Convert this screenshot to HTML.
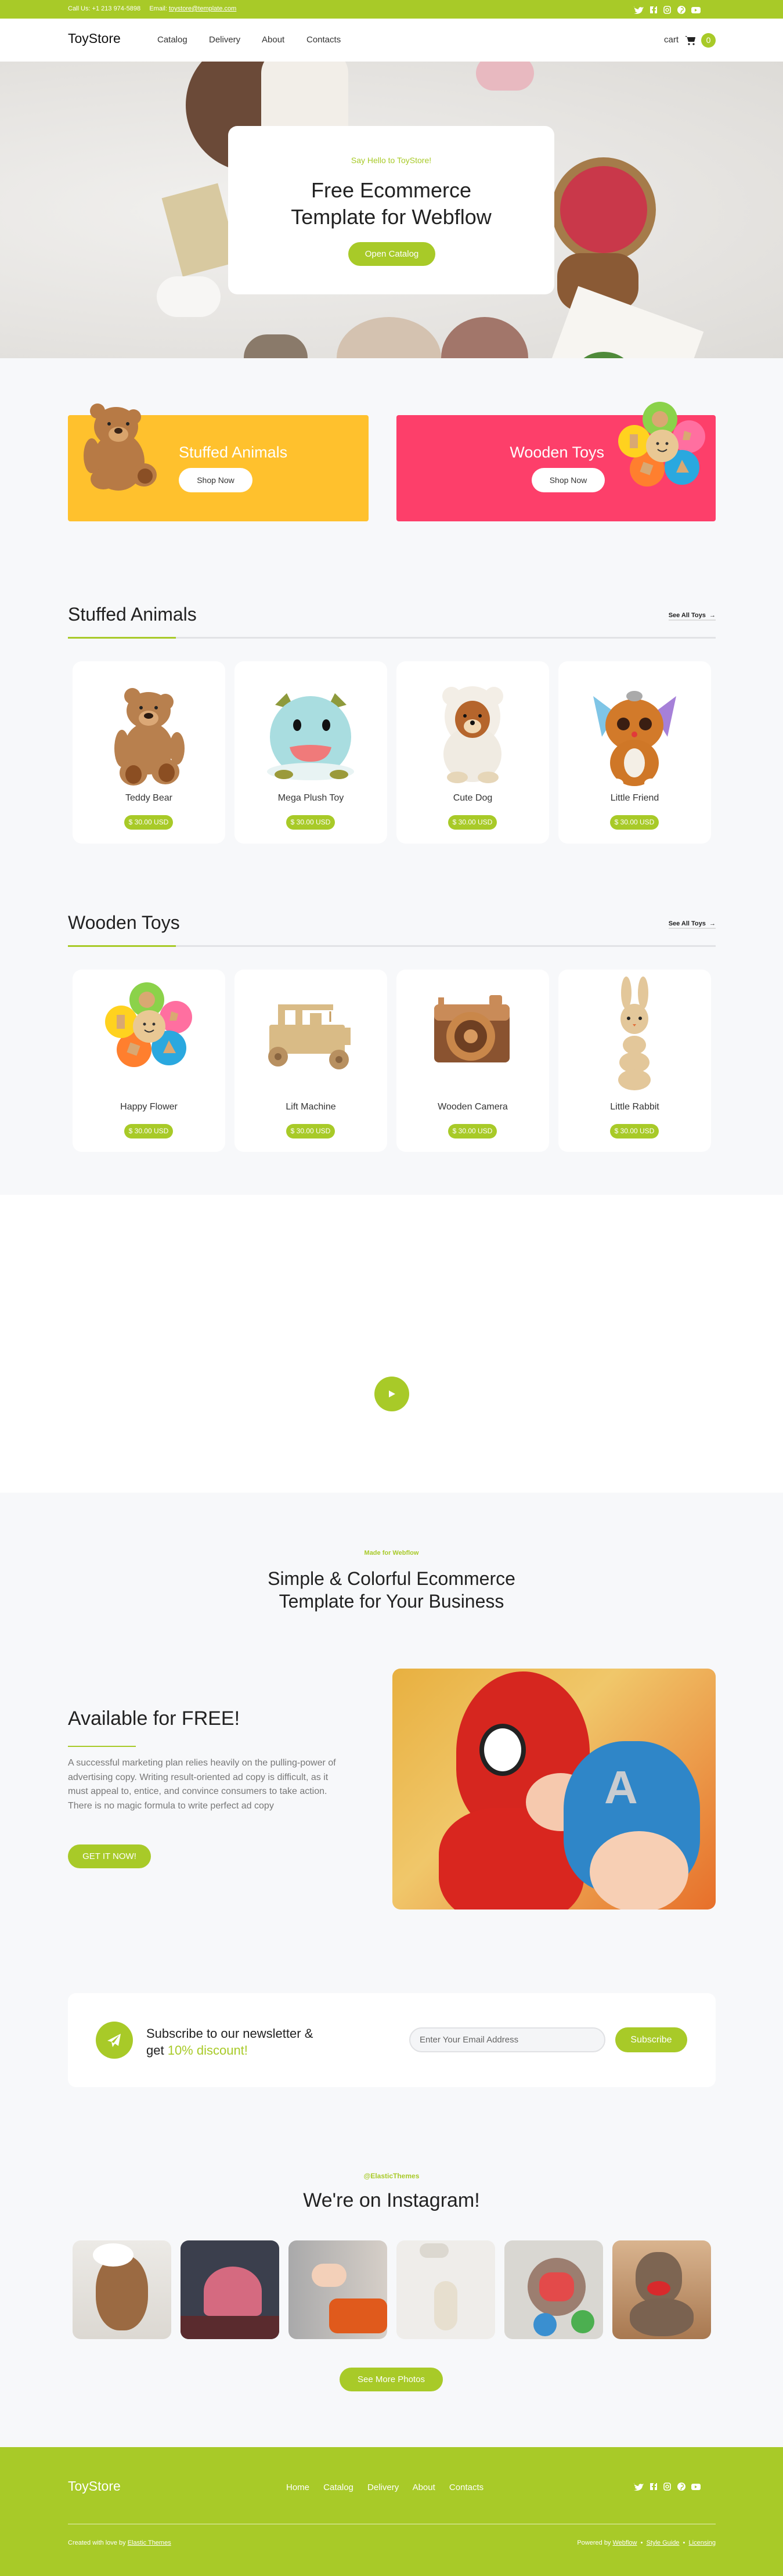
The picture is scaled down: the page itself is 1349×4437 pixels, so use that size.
<!DOCTYPE html>
<html><head><meta charset="utf-8">
<style>
*{margin:0;padding:0;box-sizing:border-box}
body{width:1349px;height:4437px;position:relative;background:#f7f8fa;font-family:"Liberation Sans",Arial,sans-serif;color:#222;overflow:hidden}
.a{position:absolute}
.g{color:#a8ca28}
.pill{position:absolute;background:#a8ca28;color:#fff;border-radius:30px;text-align:center}
.card{position:absolute;background:#fff;border-radius:16px;width:263px;height:314px}
.card .nm{position:absolute;left:0;right:0;text-align:center;font-size:16px;color:#333}
.card .pr{position:absolute;left:89px;width:84px;height:25px;line-height:25px;font-size:12px;background:#a8ca28;color:#fff;border-radius:13px;text-align:center}
.card .im{position:absolute;left:0;right:0;top:0;height:230px}
.sh{position:absolute;left:117px;font-size:32px;color:#222}
.see{position:absolute;right:116px;font-size:11px;font-weight:bold;color:#222;border-bottom:2px solid #ddd;padding-bottom:1px}
.ln{position:absolute;left:117px;width:1116px;height:3px;background:#e2e3e6}
.ln i{position:absolute;left:0;top:0;width:186px;height:3px;background:#a8ca28}
.ig{position:absolute;top:3859px;width:170px;height:170px;border-radius:14px;overflow:hidden}
</style></head><body>

<!-- top bar -->
<div class="a" style="left:0;top:0;width:1349px;height:32px;background:#a8ca28"></div>
<div class="a" style="left:117px;top:9px;font-size:11px;color:#fff">Call Us: +1 213 974-5898 &nbsp;&nbsp;&nbsp; Email: <u>toystore@template.com</u></div>
<svg class="a" style="left:1090px;top:8px" width="160" height="18" viewBox="0 0 160 18" fill="#fff">
<path d="M2 4c3 3 6 4 8 4 0-3 3-5 6-3 1 0 2-1 3-1-1 1-1 2-2 2 1 0 2 0 2-1-1 1-1 2-2 2 0 6-6 11-15 8 3 0 5-1 6-2-2 0-4-1-4-3h2c-2-1-3-2-3-4 1 0 1 1 2 1-2-1-3-3-2-5z"/>
<path d="M31 3h10c1 0 1 0 1 1v10c0 1 0 1-1 1h-3v-5h2v-2h-2v-2c0-1 1-1 2-1h0V3h-2c-2 0-3 1-3 3v2h-2v2h2v5h-4c-1 0-1 0-1-1V4c0-1 0-1 1-1z"/>
<rect x="54" y="3" width="11" height="12" rx="3" fill="none" stroke="#fff" stroke-width="1.6"/><circle cx="59.5" cy="9" r="2.5" fill="none" stroke="#fff" stroke-width="1.5"/>
<circle cx="84" cy="9" r="7"/><path d="M83 5c3-1 5 1 4 4-1 2-3 2-3 1l-1 5" stroke="#a8ca28" stroke-width="1.4" fill="none"/>
<rect x="101" y="4" width="16" height="11" rx="3"/><path d="M107 7l4 2.5-4 2.5z" fill="#a8ca28"/>
</svg>

<!-- nav -->
<div class="a" style="left:0;top:32px;width:1349px;height:74px;background:#fff"></div>
<div class="a" style="left:117px;top:53px;font-size:23px;color:#111">ToyStore</div>
<div class="a" style="left:271px;top:60px;font-size:15px;color:#333">Catalog</div>
<div class="a" style="left:360px;top:60px;font-size:15px;color:#333">Delivery</div>
<div class="a" style="left:451px;top:60px;font-size:15px;color:#333">About</div>
<div class="a" style="left:528px;top:60px;font-size:15px;color:#333">Contacts</div>
<div class="a" style="left:1144px;top:60px;font-size:15px;color:#333">cart</div>
<svg class="a" style="left:1180px;top:61px" width="19" height="18" viewBox="0 0 19 18"><path d="M0 1h3l3 10h10l2-7H5" fill="#222"/><path d="M4 3h14l-2 8H6z" fill="#222"/><circle cx="7" cy="15" r="1.6" fill="#222"/><circle cx="15" cy="15" r="1.6" fill="#222"/></svg>
<div class="pill" style="left:1208px;top:57px;width:25px;height:25px;line-height:25px;font-size:14px;border-radius:50%">0</div>

<!-- hero -->
<div class="a" style="left:0;top:106px;width:1349px;height:511px;overflow:hidden;background:radial-gradient(ellipse at 30% 50%,#f1f0ee,#e6e4e1 60%,#dddbd7)">
  <div class="a" style="left:320px;top:-40px;width:230px;height:230px;border-radius:50%;background:#6b4a38"></div>
  <div class="a" style="left:450px;top:-20px;width:150px;height:170px;border-radius:40px;background:#f2eee8"></div>
  <div class="a" style="left:820px;top:-10px;width:100px;height:60px;border-radius:30px;background:#e8b9c0"></div>
  <div class="a" style="left:950px;top:165px;width:180px;height:180px;border-radius:50%;background:#a57b4a"></div>
  <div class="a" style="left:965px;top:180px;width:150px;height:150px;border-radius:50%;background:#c9384a"></div>
  <div class="a" style="left:960px;top:330px;width:140px;height:100px;border-radius:40px;background:#8a5a35"></div>
  <div class="a" style="left:955px;top:420px;width:230px;height:200px;transform:rotate(20deg);background:#f7f5f1"></div>
  <div class="a" style="left:990px;top:500px;width:100px;height:80px;border-radius:50%;background:#4f8a3a"></div>
  <div class="a" style="left:295px;top:220px;width:100px;height:140px;transform:rotate(-15deg);background:#d8c9a0"></div>
  <div class="a" style="left:270px;top:370px;width:110px;height:70px;border-radius:40px;background:#f7f6f4"></div>
  <div class="a" style="left:580px;top:440px;width:180px;height:140px;border-radius:50%;background:#d4c2b0"></div>
  <div class="a" style="left:760px;top:440px;width:150px;height:140px;border-radius:50%;background:#a2766a"></div>
  <div class="a" style="left:420px;top:470px;width:110px;height:80px;border-radius:40px;background:#8a7a6a"></div>
</div>
<div class="a" style="left:393px;top:217px;width:562px;height:290px;background:#fff;border-radius:16px"></div>
<div class="a g" style="left:393px;top:268px;width:562px;text-align:center;font-size:14px">Say Hello to ToyStore!</div>
<div class="a" style="left:393px;top:305px;width:562px;text-align:center;font-size:36px;line-height:46px;color:#222">Free Ecommerce<br>Template for Webflow</div>
<div class="pill" style="left:600px;top:417px;width:150px;height:41px;line-height:41px;font-size:15px">Open Catalog</div>

<!-- banners -->
<div class="a" style="left:117px;top:715px;width:518px;height:183px;background:#ffc12d;border-radius:4px"></div>
<div class="a" style="left:683px;top:715px;width:550px;height:183px;background:#fd3f6a;border-radius:4px"></div>
<svg class="a" style="left:138px;top:690px" width="140" height="155" viewBox="0 0 140 155">
<g fill="#b77a45"><circle cx="30" cy="18" r="13"/><circle cx="92" cy="28" r="13"/><ellipse cx="62" cy="45" rx="38" ry="34"/><ellipse cx="66" cy="105" rx="45" ry="50"/><ellipse cx="20" cy="95" rx="14" ry="30"/><ellipse cx="40" cy="135" rx="22" ry="18"/><ellipse cx="110" cy="128" rx="22" ry="20"/></g>
<ellipse cx="66" cy="58" rx="17" ry="13" fill="#d9a46c"/><ellipse cx="66" cy="52" rx="7" ry="5" fill="#3a2417"/><circle cx="50" cy="40" r="3" fill="#222"/><circle cx="82" cy="40" r="3" fill="#222"/>
<ellipse cx="112" cy="130" rx="13" ry="13" fill="#8a4f25"/></svg>
<div class="a" style="left:308px;top:764px;font-size:27px;color:#fff">Stuffed Animals</div>
<div class="a" style="left:308px;top:806px;width:127px;height:42px;line-height:42px;text-align:center;background:#fff;border-radius:21px;font-size:14px;color:#333">Shop Now</div>
<div class="a" style="left:683px;top:764px;width:358px;text-align:right;font-size:27px;color:#fff">Wooden Toys</div>
<div class="a" style="left:916px;top:806px;width:126px;height:42px;line-height:42px;text-align:center;background:#fff;border-radius:21px;font-size:14px;color:#333">Shop Now</div>
<svg class="a" style="left:1065px;top:690px" width="150" height="150" viewBox="0 0 150 150">
<circle cx="72" cy="32" r="30" fill="#8bd24a"/><circle cx="122" cy="62" r="28" fill="#ff6fa0"/><circle cx="110" cy="115" r="30" fill="#2aa8df"/><circle cx="50" cy="118" r="30" fill="#ff7f2e"/><circle cx="28" cy="70" r="28" fill="#ffd21f"/><circle cx="76" cy="78" r="28" fill="#e9c894"/>
<circle cx="72" cy="32" r="14" fill="#d9a872"/><rect x="20" y="58" width="14" height="24" fill="#d9a872"/><path d="M114 52l12 4-3 12h-12z" fill="#d9a872"/><path d="M110 102l12 22h-22z" fill="#d9a872"/><rect x="40" y="108" width="18" height="18" transform="rotate(20 49 117)" fill="#d9a872"/>
<circle cx="68" cy="74" r="2.5" fill="#333"/><circle cx="84" cy="74" r="2.5" fill="#333"/><path d="M68 84q8 7 16 0" stroke="#333" stroke-width="2" fill="none"/></svg>

<!-- Stuffed Animals section -->
<div class="sh" style="top:1040px">Stuffed Animals</div>
<div class="see" style="top:1054px">See All Toys &nbsp;&#8594;</div>
<div class="ln" style="top:1097px"><i></i></div>

<div class="card" style="left:125px;top:1139px">
<svg class="im" viewBox="0 0 263 230"><g fill="#b8804e"><circle cx="103" cy="60" r="14"/><circle cx="160" cy="70" r="14"/><ellipse cx="131" cy="85" rx="38" ry="32"/><ellipse cx="131" cy="150" rx="42" ry="45"/><ellipse cx="85" cy="150" rx="13" ry="32"/><ellipse cx="180" cy="150" rx="13" ry="28"/><ellipse cx="105" cy="192" rx="24" ry="22"/><ellipse cx="160" cy="190" rx="24" ry="22"/></g><ellipse cx="131" cy="98" rx="17" ry="13" fill="#dba876"/><ellipse cx="131" cy="94" rx="8" ry="5" fill="#2b1a10"/><circle cx="118" cy="80" r="3" fill="#222"/><circle cx="144" cy="80" r="3" fill="#222"/><ellipse cx="105" cy="195" rx="14" ry="16" fill="#8b4e22"/><ellipse cx="162" cy="192" rx="14" ry="16" fill="#8b4e22"/></svg>
<div class="nm" style="top:227px">Teddy Bear</div><div class="pr" style="top:265px">$ 30.00 USD</div></div>

<div class="card" style="left:404px;top:1139px">
<svg class="im" viewBox="0 0 263 230"><path d="M70 75l20-20 15 30z" fill="#8e9a3c"/><path d="M193 75l-20-20-15 30z" fill="#8e9a3c"/><ellipse cx="131" cy="130" rx="70" ry="70" fill="#a9dde0"/><ellipse cx="131" cy="190" rx="75" ry="15" fill="#e8f3f3"/><ellipse cx="108" cy="110" rx="7" ry="10" fill="#111"/><ellipse cx="158" cy="110" rx="7" ry="10" fill="#111"/><path d="M95 148q36-8 72 0q-6 25-36 25q-30 0-36-25z" fill="#f07a7a"/><ellipse cx="85" cy="195" rx="16" ry="8" fill="#9b9a3a"/><ellipse cx="180" cy="195" rx="16" ry="8" fill="#9b9a3a"/></svg>
<div class="nm" style="top:227px">Mega Plush Toy</div><div class="pr" style="top:265px">$ 30.00 USD</div></div>

<div class="card" style="left:683px;top:1139px">
<svg class="im" viewBox="0 0 263 230"><circle cx="95" cy="60" r="16" fill="#f3eee6"/><circle cx="168" cy="60" r="16" fill="#f3eee6"/><ellipse cx="131" cy="95" rx="48" ry="52" fill="#f3eee6"/><ellipse cx="131" cy="160" rx="50" ry="48" fill="#f0ebe2"/><ellipse cx="131" cy="100" rx="30" ry="32" fill="#b5652c"/><ellipse cx="131" cy="112" rx="15" ry="12" fill="#f1d9b5"/><circle cx="131" cy="106" r="4" fill="#111"/><circle cx="118" cy="94" r="3" fill="#111"/><circle cx="144" cy="94" r="3" fill="#111"/><ellipse cx="105" cy="200" rx="18" ry="10" fill="#e6d6b8"/><ellipse cx="158" cy="200" rx="18" ry="10" fill="#e6d6b8"/></svg>
<div class="nm" style="top:227px">Cute Dog</div><div class="pr" style="top:265px">$ 30.00 USD</div></div>

<div class="card" style="left:962px;top:1139px">
<svg class="im" viewBox="0 0 263 230"><path d="M60 60l40 30-25 40z" fill="#7fc5e6"/><path d="M203 60l-40 30 25 40z" fill="#a680d8"/><ellipse cx="131" cy="110" rx="50" ry="45" fill="#d27a2a"/><ellipse cx="131" cy="175" rx="42" ry="40" fill="#cf7727"/><ellipse cx="131" cy="175" rx="18" ry="25" fill="#f4efe6"/><circle cx="112" cy="108" r="11" fill="#3a1e12"/><circle cx="150" cy="108" r="11" fill="#3a1e12"/><circle cx="131" cy="126" r="5" fill="#e23a3a"/><ellipse cx="131" cy="60" rx="14" ry="9" fill="#aaa"/><ellipse cx="100" cy="210" rx="12" ry="8" fill="#fff"/><ellipse cx="160" cy="210" rx="12" ry="8" fill="#fff"/></svg>
<div class="nm" style="top:227px">Little Friend</div><div class="pr" style="top:265px">$ 30.00 USD</div></div>

<!-- Wooden Toys section -->
<div class="sh" style="top:1571px">Wooden Toys</div>
<div class="see" style="top:1585px">See All Toys &nbsp;&#8594;</div>
<div class="ln" style="top:1628px"><i></i></div>

<div class="card" style="left:125px;top:1670px">
<svg class="im" viewBox="0 0 263 230"><g transform="translate(56 20)">
<circle cx="72" cy="32" r="30" fill="#8bd24a"/><circle cx="122" cy="62" r="28" fill="#ff6fa0"/><circle cx="110" cy="115" r="30" fill="#2aa8df"/><circle cx="50" cy="118" r="30" fill="#ff7f2e"/><circle cx="28" cy="70" r="28" fill="#ffd21f"/><circle cx="76" cy="78" r="28" fill="#e9c894"/>
<circle cx="72" cy="32" r="14" fill="#d9a872"/><rect x="20" y="58" width="14" height="24" fill="#d9a872"/><path d="M114 52l12 4-3 12h-12z" fill="#d9a872"/><path d="M110 102l12 22h-22z" fill="#d9a872"/><rect x="40" y="108" width="18" height="18" transform="rotate(20 49 117)" fill="#d9a872"/>
<circle cx="68" cy="74" r="2.5" fill="#333"/><circle cx="84" cy="74" r="2.5" fill="#333"/><path d="M68 84q8 7 16 0" stroke="#333" stroke-width="2" fill="none"/></g></svg>
<div class="nm" style="top:228px">Happy Flower</div><div class="pr" style="top:266px">$ 30.00 USD</div></div>

<div class="card" style="left:404px;top:1670px">
<svg class="im" viewBox="0 0 263 230"><g fill="#d9bb86"><rect x="60" y="95" width="130" height="50" rx="4"/><rect x="80" y="60" width="90" height="10"/><rect x="75" y="60" width="12" height="45"/><rect x="150" y="100" width="50" height="30"/><rect x="105" y="70" width="12" height="35"/><rect x="130" y="75" width="20" height="30"/></g><path d="M165 72v18" stroke="#c49a5a" stroke-width="3"/><circle cx="75" cy="150" r="17" fill="#b89060"/><circle cx="180" cy="155" r="17" fill="#b89060"/><circle cx="75" cy="150" r="6" fill="#8a6540"/><circle cx="180" cy="155" r="6" fill="#8a6540"/></svg>
<div class="nm" style="top:228px">Lift Machine</div><div class="pr" style="top:266px">$ 30.00 USD</div></div>

<div class="card" style="left:683px;top:1670px">
<svg class="im" viewBox="0 0 263 230"><rect x="65" y="60" width="130" height="100" rx="8" fill="#8a5330"/><rect x="65" y="60" width="130" height="28" rx="8" fill="#c98b58"/><rect x="72" y="48" width="10" height="16" fill="#c98b58"/><rect x="160" y="44" width="22" height="18" rx="4" fill="#c98b58"/><circle cx="128" cy="115" r="42" fill="#c9874a"/><circle cx="128" cy="115" r="28" fill="#6e3f22"/><circle cx="128" cy="115" r="12" fill="#d79a60"/></svg>
<div class="nm" style="top:228px">Wooden Camera</div><div class="pr" style="top:266px">$ 30.00 USD</div></div>

<div class="card" style="left:962px;top:1670px">
<svg class="im" viewBox="0 0 263 230"><g fill="#e3c79a"><ellipse cx="117" cy="40" rx="9" ry="28"/><ellipse cx="146" cy="40" rx="9" ry="28"/><ellipse cx="131" cy="85" rx="24" ry="26"/><ellipse cx="131" cy="130" rx="20" ry="16"/><ellipse cx="131" cy="160" rx="26" ry="18"/><ellipse cx="131" cy="190" rx="28" ry="18"/></g><circle cx="121" cy="84" r="3" fill="#222"/><circle cx="141" cy="84" r="3" fill="#222"/><path d="M128 94l3 4 3-4z" fill="#e2703a"/></svg>
<div class="nm" style="top:228px">Little Rabbit</div><div class="pr" style="top:266px">$ 30.00 USD</div></div>

<!-- video -->
<div class="a" style="left:0;top:2058px;width:1349px;height:513px;background:#fff"></div>
<div class="a" style="left:645px;top:2371px;width:60px;height:60px;border-radius:50%;background:#a8ca28"></div>
<svg class="a" style="left:667px;top:2393px" width="16" height="16"><path d="M3 2l11 6-11 6z" fill="#fff"/></svg>

<!-- about -->
<div class="a g" style="left:0;width:1349px;top:2669px;text-align:center;font-size:11px;font-weight:bold">Made for Webflow</div>
<div class="a" style="left:0;width:1349px;top:2700px;text-align:center;font-size:32px;line-height:39px;color:#222">Simple &amp; Colorful Ecommerce<br>Template for Your Business</div>
<div class="a" style="left:117px;top:2941px;font-size:34px;color:#222">Available for FREE!</div>
<div class="a" style="left:117px;top:3007px;width:117px;height:2px;background:#a8ca28"></div>
<div class="a" style="left:117px;top:3025px;width:470px;font-size:16px;line-height:24.5px;color:#777">A successful marketing plan relies heavily on the pulling-power of advertising copy. Writing result-oriented ad copy is difficult, as it must appeal to, entice, and convince consumers to take action. There is no magic formula to write perfect ad copy</div>
<div class="pill" style="left:117px;top:3177px;width:143px;height:41px;line-height:41px;font-size:15px">GET IT NOW!</div>
<div class="a" style="left:676px;top:2874px;width:557px;height:415px;border-radius:14px;overflow:hidden;background:linear-gradient(135deg,#e8b040,#f0c76a 40%,#e76f2a)">
  <div class="a" style="left:110px;top:5px;width:230px;height:280px;border-radius:50% 50% 40% 40%;background:#d6261f"></div>
  <div class="a" style="left:80px;top:240px;width:250px;height:200px;border-radius:40%;background:#d9261f"></div>
  <div class="a" style="left:150px;top:95px;width:80px;height:90px;border-radius:50%;background:#fff;border:8px solid #222"></div>
  <div class="a" style="left:230px;top:180px;width:120px;height:100px;border-radius:50%;background:#f6c9ae"></div>
  <div class="a" style="left:295px;top:125px;width:235px;height:260px;border-radius:45% 45% 35% 35%;background:#2f86c8"></div>
  <div class="a" style="left:340px;top:280px;width:170px;height:140px;border-radius:50%;background:#f7cfb4"></div>
  <div class="a" style="left:365px;top:170px;width:60px;height:70px;font-size:80px;font-weight:bold;color:#c9ccd0;line-height:70px">A</div>
</div>

<!-- newsletter -->
<div class="a" style="left:117px;top:3433px;width:1116px;height:162px;background:#fff;border-radius:14px"></div>
<div class="a" style="left:165px;top:3482px;width:64px;height:64px;border-radius:50%;background:#a8ca28"></div>
<svg class="a" style="left:179px;top:3496px" width="36" height="36" viewBox="0 0 36 36"><path d="M29 7L6 19l7 2 2 9 4-6 6 4z" fill="#fff"/><path d="M13 21l13-11-9 13" fill="#a8ca28"/></svg>
<div class="a" style="left:252px;top:3488px;font-size:22px;line-height:29px;color:#222">Subscribe to our newsletter &amp;<br>get <span class="g">10% discount!</span></div>
<div class="a" style="left:705px;top:3492px;width:338px;height:43px;border:2px solid #e0e1e4;background:#f4f5f7;border-radius:22px;font-size:15px;color:#666;line-height:39px;padding-left:16px">Enter Your Email Address</div>
<div class="pill" style="left:1060px;top:3492px;width:124px;height:43px;line-height:43px;font-size:16px">Subscribe</div>

<!-- instagram -->
<div class="a g" style="left:0;width:1349px;top:3741px;text-align:center;font-size:12px;font-weight:bold">@ElasticThemes</div>
<div class="a" style="left:0;width:1349px;top:3771px;text-align:center;font-size:34px;color:#222">We're on Instagram!</div>
<div class="ig" style="left:125px;background:linear-gradient(#eceae6,#dcd8d2)"><div class="a" style="left:40px;top:25px;width:90px;height:130px;border-radius:45%;background:#9b6a42"></div><div class="a" style="left:35px;top:5px;width:70px;height:40px;border-radius:50%;background:#fff"></div></div>
<div class="ig" style="left:311px;background:#3b3f4d"><div class="a" style="left:40px;top:45px;width:100px;height:85px;border-radius:50% 50% 10% 10%;background:#d56a80"></div><div class="a" style="left:0;top:130px;width:170px;height:40px;background:#5a2b2e"></div></div>
<div class="ig" style="left:497px;background:linear-gradient(90deg,#a9a9aa,#d6cfc8)"><div class="a" style="left:70px;top:100px;width:100px;height:60px;border-radius:14px;background:#e05a1c"></div><div class="a" style="left:40px;top:40px;width:60px;height:40px;border-radius:20px;background:#f3d0b9"></div></div>
<div class="ig" style="left:683px;background:#efedea"><div class="a" style="left:65px;top:70px;width:40px;height:85px;border-radius:20px;background:#e7dfcf"></div><div class="a" style="left:40px;top:5px;width:50px;height:25px;border-radius:14px;background:#dcd8d0"></div></div>
<div class="ig" style="left:869px;background:#d9d7d2"><div class="a" style="left:40px;top:30px;width:100px;height:100px;border-radius:50%;background:#9c7e70"></div><div class="a" style="left:60px;top:55px;width:60px;height:50px;border-radius:20px;background:#e34a4a"></div><div class="a" style="left:50px;top:125px;width:40px;height:40px;border-radius:50%;background:#3a8fd0"></div><div class="a" style="left:115px;top:120px;width:40px;height:40px;border-radius:50%;background:#4caf50"></div></div>
<div class="ig" style="left:1055px;background:linear-gradient(#d9b48f,#a87850)"><div class="a" style="left:40px;top:20px;width:80px;height:90px;border-radius:45%;background:#7d6552"></div><div class="a" style="left:30px;top:100px;width:110px;height:65px;border-radius:45%;background:#7a6250"></div><div class="a" style="left:60px;top:70px;width:40px;height:25px;border-radius:50%;background:#d8292c"></div></div>
<div class="pill" style="left:585px;top:4078px;width:178px;height:41px;line-height:41px;font-size:15px">See More Photos</div>

<!-- footer -->
<div class="a" style="left:0;top:4215px;width:1349px;height:222px;background:#a8ca28"></div>
<div class="a" style="left:117px;top:4269px;font-size:23px;color:#fff">ToyStore</div>
<div class="a" style="left:493px;top:4276px;font-size:15px;color:#fff;word-spacing:20px">Home Catalog Delivery About Contacts</div>
<svg class="a" style="left:1090px;top:4274px" width="160" height="18" viewBox="0 0 160 18" fill="#fff">
<path d="M2 4c3 3 6 4 8 4 0-3 3-5 6-3 1 0 2-1 3-1-1 1-1 2-2 2 1 0 2 0 2-1-1 1-1 2-2 2 0 6-6 11-15 8 3 0 5-1 6-2-2 0-4-1-4-3h2c-2-1-3-2-3-4 1 0 1 1 2 1-2-1-3-3-2-5z"/>
<path d="M31 3h10c1 0 1 0 1 1v10c0 1 0 1-1 1h-3v-5h2v-2h-2v-2c0-1 1-1 2-1h0V3h-2c-2 0-3 1-3 3v2h-2v2h2v5h-4c-1 0-1 0-1-1V4c0-1 0-1 1-1z"/>
<rect x="54" y="3" width="11" height="12" rx="3" fill="none" stroke="#fff" stroke-width="1.6"/><circle cx="59.5" cy="9" r="2.5" fill="none" stroke="#fff" stroke-width="1.5"/>
<circle cx="84" cy="9" r="7"/><path d="M83 5c3-1 5 1 4 4-1 2-3 2-3 1l-1 5" stroke="#a8ca28" stroke-width="1.4" fill="none"/>
<rect x="101" y="4" width="16" height="11" rx="3"/><path d="M107 7l4 2.5-4 2.5z" fill="#a8ca28"/>
</svg>
<div class="a" style="left:117px;top:4347px;width:1116px;height:1px;background:rgba(255,255,255,.7)"></div>
<div class="a" style="left:117px;top:4374px;font-size:11px;color:#fff">Created with love by <u>Elastic Themes</u></div>
<div class="a" style="right:116px;top:4374px;font-size:11px;color:#fff">Powered by <u>Webflow</u> &nbsp;•&nbsp; <u>Style Guide</u> &nbsp;•&nbsp; <u>Licensing</u></div>
</body></html>
